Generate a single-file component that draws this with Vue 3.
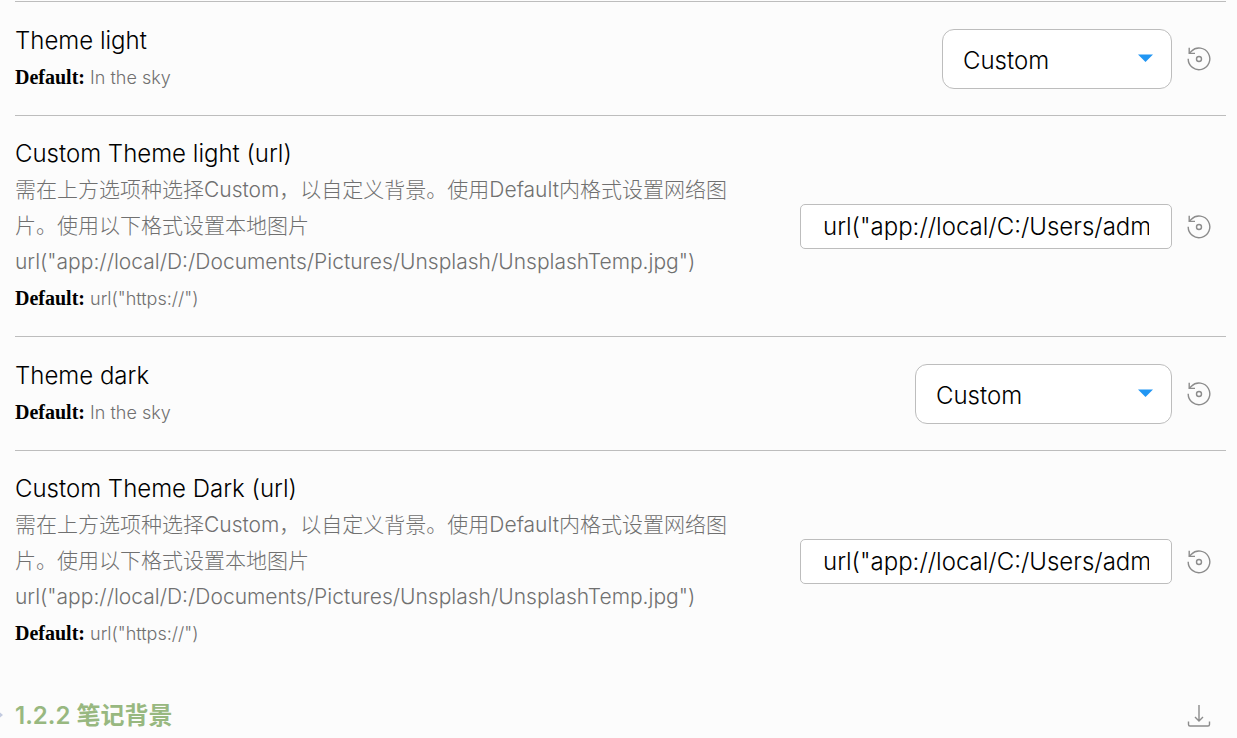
<script setup>
import { reactive } from 'vue'

const desc = [
  '需在上方选项种选择Custom，以自定义背景。使用Default内格式设置网络图片。使用以下格式设置本地图片',
  'url("app://local/D:/Documents/Pictures/Unsplash/UnsplashTemp.jpg")',
]

const settings = reactive([
  { id: 'theme-light', name: 'Theme light', type: 'select', size: 'narrow', value: 'Custom', fallback: 'In the sky' },
  { id: 'theme-light-url', name: 'Custom Theme light (url)', type: 'text', desc, value: 'url("app://local/C:/Users/admin/Pictures/light.jpg")', fallback: 'url("https://")' },
  { id: 'theme-dark', name: 'Theme dark', type: 'select', size: 'wide', value: 'Custom', fallback: 'In the sky' },
  { id: 'theme-dark-url', name: 'Custom Theme Dark (url)', type: 'text', desc, value: 'url("app://local/C:/Users/admin/Pictures/dark.jpg")', fallback: 'url("https://")' },
])
</script>

<template>
  <main class="settings">
    <section v-for="item in settings" :key="item.id" class="item">
      <div class="info">
        <label class="name" :for="item.id">{{ item.name }}</label>
        <p v-for="line in item.desc" :key="line" class="desc">{{ line }}</p>
        <p class="default"><strong>Default:</strong> {{ item.fallback }}</p>
      </div>
      <div class="control">
        <div v-if="item.type === 'select'" class="dropdown" :class="item.size">
          <select :id="item.id" v-model="item.value">
            <option>Custom</option>
            <option>In the sky</option>
          </select>
          <svg class="arrow" width="16" height="8" viewBox="0 0 16 8" aria-hidden="true">
            <path d="M0 0.5h15L7.5 8z" fill="#2196f3" />
          </svg>
        </div>
        <input v-else :id="item.id" v-model="item.value" class="field" type="text" spellcheck="false" />
        <button class="icon-button" type="button" aria-label="Restore default">
          <svg width="24" height="24" viewBox="0 0 24 24" fill="none" stroke="#8c8c8c" stroke-width="1.4" aria-hidden="true">
            <path d="M1.2 11.8A10.8 10.8 0 1 0 4.4 4.2L2.2 6.4" />
            <path d="M2.2 0.8v5.6H8" />
            <circle cx="12" cy="12" r="2.5" />
          </svg>
        </button>
      </div>
    </section>

    <header class="heading">
      <svg class="marker" width="3" height="6" viewBox="0 0 3 6" aria-hidden="true">
        <path d="M0 0.5L3 3L0 5.5z" fill="#c3cbe0" />
      </svg>
      <h2>1.2.2 笔记背景</h2>
      <button class="icon-button" type="button" aria-label="Export">
        <svg width="24" height="24" viewBox="0 0 24 24" fill="none" stroke="#8c8c8c" stroke-width="1.4" aria-hidden="true">
          <path d="M12 1v16M8 13l4 4l4-4" />
          <path d="M1.5 17.5v3a1.5 1.5 0 0 0 1.5 1.5h18a1.5 1.5 0 0 0 1.5-1.5v-3" />
        </svg>
      </button>
    </header>
  </main>
</template>

<style>
body {
  background: #fcfcfc;
}
</style>

<style scoped>
.settings {
  padding: 1px 11px 0 15px;
  font-family: Inter, "Noto Sans CJK SC", sans-serif;
  font-weight: 300;
  line-height: 36px;
  color: #000;
}
.item {
  box-sizing: border-box;
  min-height: 114px;
  display: flex;
  align-items: center;
  gap: 50px;
  padding: 20px 0 19px;
  border-top: 1px solid #bdbdbd;
}
.info {
  flex: 1;
  min-width: 0;
}
.name {
  display: block;
  font-size: 24px;
}
.desc,
.default {
  margin: 0;
  color: #707070;
}
.desc {
  font-size: 21px;
}
.default {
  padding-top: 1px;
  font-size: 18px;
}
.default strong {
  font-family: "Liberation Serif", serif;
  font-size: 20px;
  font-weight: 700;
  line-height: 1;
  color: #000;
}
.control {
  display: flex;
  align-items: center;
}
.dropdown {
  position: relative;
}
.narrow {
  width: 230px;
}
.wide {
  width: 257px;
}
select,
.field {
  box-sizing: border-box;
  border: 1px solid #bdbdbd;
  background: #fff;
  color: #000;
  font: inherit;
  font-size: 24px;
}
select {
  display: block;
  width: 100%;
  height: 60px;
  padding: 4px 40px 0 20px;
  border-radius: 12px;
  appearance: none;
}
.arrow {
  position: absolute;
  right: 18px;
  top: 25px;
  pointer-events: none;
}
.field {
  width: 372px;
  height: 45px;
  padding: 0 22px;
  border-radius: 5px;
}
.icon-button {
  display: flex;
  padding: 0 15px;
  border: 0;
  background: none;
}
.heading {
  position: relative;
  display: flex;
  align-items: center;
  justify-content: space-between;
  margin-top: 27px;
}
.heading h2 {
  margin: 0;
  font-size: 24px;
  font-weight: 600;
  color: #98b880;
}
.marker {
  position: absolute;
  left: -15px;
  top: 14px;
}
</style>
